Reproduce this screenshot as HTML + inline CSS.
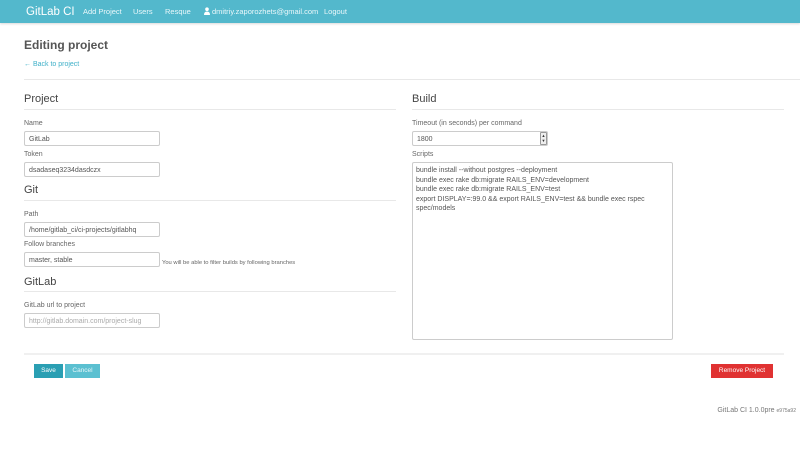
<!DOCTYPE html>
<html><head><meta charset="utf-8"><style>
*{box-sizing:border-box;margin:0;padding:0}
body{width:800px;height:451px;background:#fff;font-family:"Liberation Sans",sans-serif;color:#555;position:relative;overflow:hidden}
.a{position:absolute;white-space:nowrap}
.nav{position:absolute;left:0;top:0;width:800px;height:23px;background:#53b8cc;box-shadow:0 1px 2px rgba(0,0,0,.15)}
.nav .a{color:#eaf7fa;font-size:7.5px;top:7px}
.lbl{font-size:7px;color:#666}
.h{font-size:11px;color:#444}
.line{position:absolute;height:1px;background:#e8e8e8}
.inp{position:absolute;border:1px solid #ccc;border-radius:2px;background:#fff;font-size:7px;color:#555;padding:4px 4px 0;height:15px;line-height:8px;white-space:nowrap}
.btn{position:absolute;height:14px;font-size:6.5px;color:#fff;text-align:center;line-height:8px;padding-top:3px}
</style></head><body>
<div class="nav">
<div class="a" style="left:26px;top:5px;font-size:11.5px;color:#fff;top:5.5px">GitLab CI</div>
<div class="a" style="left:83px">Add Project</div>
<div class="a" style="left:133px">Users</div>
<div class="a" style="left:165px">Resque</div>
<svg class="a" style="left:204px;top:7px" width="6" height="8" viewBox="0 0 6 8"><circle cx="3" cy="2.2" r="1.8" fill="#fff"/><path d="M0 8 Q0 4.5 3 4.5 Q6 4.5 6 8Z" fill="#fff"/></svg>
<div class="a" style="left:212px">dmitriy.zaporozhets@gmail.com</div>
<div class="a" style="left:324px">Logout</div>
</div>
<div class="a" style="left:24px;top:38px;font-size:12px;font-weight:bold;color:#555">Editing project</div>
<div class="a" style="left:24px;top:61px;font-size:7px;color:#3fb0c8">← Back to project</div>
<div class="line" style="left:24px;top:79px;width:776px"></div>

<div class="a h" style="left:24px;top:93px">Project</div>
<div class="line" style="left:24px;top:109px;width:372px"></div>
<div class="a lbl" style="left:24px;top:120px">Name</div>
<div class="inp" style="left:24px;top:131px;width:136px">GitLab</div>
<div class="a lbl" style="left:24px;top:151px">Token</div>
<div class="inp" style="left:24px;top:162px;width:136px">dsadaseq3234dasdczx</div>
<div class="a h" style="left:24px;top:184px">Git</div>
<div class="line" style="left:24px;top:200px;width:372px"></div>
<div class="a lbl" style="left:24px;top:211px">Path</div>
<div class="inp" style="left:24px;top:222px;width:136px">/home/gitlab_ci/ci-projects/gitlabhq</div>
<div class="a lbl" style="left:24px;top:241px">Follow branches</div>
<div class="inp" style="left:24px;top:252px;width:136px">master, stable</div>
<div class="a" style="left:162px;top:260px;font-size:5.8px;color:#666">You will be able to filter builds by following branches</div>
<div class="a h" style="left:24px;top:276px">GitLab</div>
<div class="line" style="left:24px;top:291px;width:372px"></div>
<div class="a lbl" style="left:24px;top:302px">GitLab url to project</div>
<div class="inp" style="left:24px;top:313px;width:136px;color:#aaa">http://gitlab.domain.com/project-slug</div>

<div class="a h" style="left:412px;top:93px">Build</div>
<div class="line" style="left:412px;top:109px;width:372px"></div>
<div class="a lbl" style="left:412px;top:120px">Timeout (in seconds) per command</div>
<div class="inp" style="left:412px;top:131px;width:136px">1800</div>
<div class="a" style="left:540px;top:132px;width:7px;height:13px;border:1px solid #999;border-radius:1px;background:#eee;font-size:4px;line-height:5px;text-align:center;color:#333">▲<br>▼</div>
<div class="a lbl" style="left:412px;top:151px">Scripts</div>
<div class="inp" style="left:412px;top:162px;width:261px;height:178px;white-space:pre;line-height:9.5px;font-size:7px;padding:3px 3px">bundle install --without postgres --deployment
bundle exec rake db:migrate RAILS_ENV=development
bundle exec rake db:migrate RAILS_ENV=test
export DISPLAY=:99.0 &amp;&amp; export RAILS_ENV=test &amp;&amp; bundle exec rspec
spec/models</div>

<div class="line" style="left:24px;top:353px;width:760px;height:2px;background:#f0f0f0"></div>
<div class="btn" style="left:34px;top:364px;width:29px;background:#2a9fb3">Save</div>
<div class="btn" style="left:65px;top:364px;width:35px;background:#5bc0d1;color:#e6f6f9">Cancel</div>
<div class="btn" style="left:711px;top:364px;width:62px;background:#e03232">Remove Project</div>
<div class="a" style="right:4px;top:407px;font-size:7px;color:#777">GitLab CI 1.0.0pre <span style="font-size:5px">e975a92</span></div>
</body></html>
